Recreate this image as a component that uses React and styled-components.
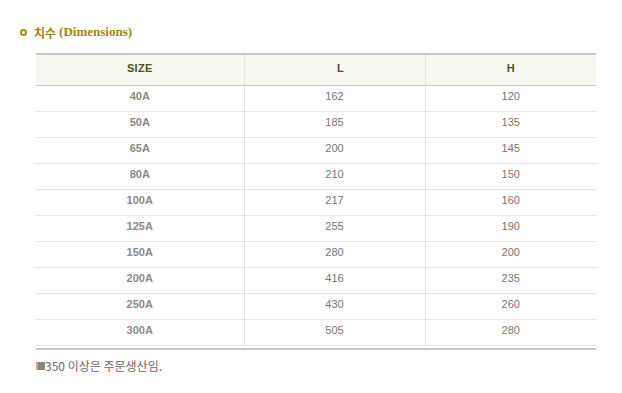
import React from "react";
import styled, { createGlobalStyle } from "styled-components";

const GlobalStyle = createGlobalStyle`
  html, body {
    margin: 0;
    padding: 0;
    background: #ffffff;
  }
`;

const Page = styled.div`
  width: 622px;
  height: 393px;
  padding: 24px 0 0 20px;
  box-sizing: border-box;
`;

const Title = styled.h3`
  margin: 0;
  display: flex;
  align-items: center;
  height: 16px;
  font-family: "Liberation Serif", "Noto Sans CJK KR", serif;
  font-size: 13px;
  font-weight: bold;
  color: #9c8611;
`;

const Ring = styled.span`
  width: 3px;
  height: 3px;
  border: 2px solid #a59015;
  border-radius: 50%;
  margin-right: 7px;
`;

const Korean = styled.span`
  font-family: "Noto Sans CJK KR", sans-serif;
  font-size: 12px;
  margin-right: 3px;
`;

const TableWrap = styled.div`
  margin: 13px 0 0 16px;
  width: 560px;
  border-bottom: 2px solid #c9c9c9;
  padding-bottom: 2px;
`;

const Table = styled.table`
  width: 100%;
  border-collapse: collapse;
  border-top: 2px solid #c9c9c9;
  table-layout: fixed;
`;

const Th = styled.th`
  height: 25px;
  background: #f7f7f2;
  border-bottom: 1px solid #c9c9c9;
  border-left: ${(p) => (p.$first ? "none" : "1px solid #e2e2e2")};
  font-family: "Liberation Sans", Arial, sans-serif;
  font-size: 11px;
  font-weight: bold;
  letter-spacing: 0.3px;
  color: #4c531f;
  text-align: center;
  padding: 0 0 5px ${(p) => p.$shift || 0}px;
`;

const Td = styled.td`
  height: 20px;
  border-bottom: 1px solid #e4e4e4;
  border-left: ${(p) => (p.$first ? "none" : "1px solid #e4e4e4")};
  font-family: "Liberation Sans", Arial, sans-serif;
  font-size: 11px;
  font-weight: ${(p) => (p.$first ? "bold" : "normal")};
  color: ${(p) => (p.$first ? "#8a8a8a" : "#777777")};
  text-align: center;
  padding: 0 0 5px;
`;

const Note = styled.p`
  margin: 7px 0 0 16px;
  display: flex;
  align-items: center;
  font-family: "Noto Sans CJK KR", "Liberation Sans", sans-serif;
  font-size: 12px;
  color: #6a6a6a;
`;

const Square = styled.span`
  width: 7px;
  height: 8px;
  background: #858585;
  border-left: 2px solid #e8a276;
`;

const rows = [
  ["40A", 162, 120],
  ["50A", 185, 135],
  ["65A", 200, 145],
  ["80A", 210, 150],
  ["100A", 217, 160],
  ["125A", 255, 190],
  ["150A", 280, 200],
  ["200A", 416, 235],
  ["250A", 430, 260],
  ["300A", 505, 280],
];

const App = () => {
  return (
    <Page>
      <GlobalStyle />
      <Title>
        <Ring />
        <Korean>치수</Korean>(Dimensions)
      </Title>
      <TableWrap>
        <Table>
          <colgroup>
            <col style={{ width: 208 }} />
            <col style={{ width: 181 }} />
            <col />
          </colgroup>
          <thead>
            <tr>
              <Th $first>SIZE</Th>
              <Th $shift={12}>L</Th>
              <Th>H</Th>
            </tr>
          </thead>
          <tbody>
            {rows.map(([size, l, h]) => (
              <tr key={size}>
                <Td $first>{size}</Td>
                <Td>{l}</Td>
                <Td>{h}</Td>
              </tr>
            ))}
          </tbody>
        </Table>
      </TableWrap>
      <Note>
        <Square />
        350 이상은 주문생산임.
      </Note>
    </Page>
  );
};

export default App;
